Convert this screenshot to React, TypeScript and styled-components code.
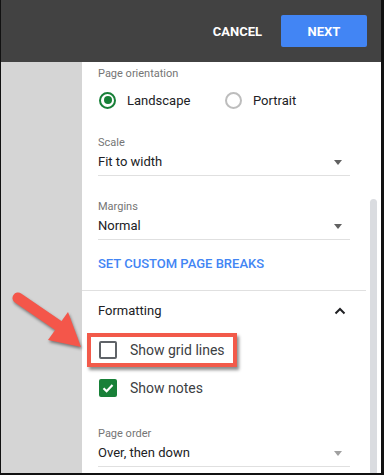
import styled, { createGlobalStyle } from "styled-components";

const GlobalStyle = createGlobalStyle`
  html, body {
    margin: 0;
    padding: 0;
    background: #000;
  }
  * {
    box-sizing: border-box;
  }
`;

const Frame = styled.div`
  position: relative;
  width: 384px;
  height: 475px;
  display: flex;
  flex-direction: column;
  background: #111;
  border-left: 1px solid #111;
  border-right: 3px solid #111;
  border-bottom: 2px solid #111;
  font-family: Roboto, "Liberation Sans", sans-serif;
  overflow: hidden;
`;

const Header = styled.header`
  height: 62px;
  flex: none;
  background: #424242;
  display: flex;
  align-items: center;
  justify-content: flex-end;
  gap: 19px;
  padding-right: 14px;
`;

const TextButton = styled.button`
  background: none;
  border: none;
  padding: 0;
  color: #fff;
  font: 700 13px Roboto, "Liberation Sans", sans-serif;
`;

const PrimaryButton = styled.button`
  width: 86px;
  height: 32px;
  border: none;
  border-radius: 2px;
  background: #4285f4;
  color: #fff;
  font: 700 13px Roboto, "Liberation Sans", sans-serif;
`;

const Body = styled.div`
  flex: 1;
  display: flex;
  min-height: 0;
`;

const Side = styled.div`
  width: 81px;
  background: #d5d5d5;
`;

const Panel = styled.div`
  position: relative;
  flex: 1;
  background: #fff;
  overflow: hidden;
`;

const Content = styled.div`
  width: 252px;
  margin-left: 16px;
`;

const Label = styled.div<{ $top?: number }>`
  margin-top: ${(p) => p.$top ?? 0}px;
  font-size: 11px;
  line-height: 16px;
  color: #757575;
`;

const RadioRow = styled.div`
  margin-top: 2px;
  height: 32px;
  display: flex;
  align-items: center;
`;

const RadioOption = styled.label<{ $width?: number }>`
  display: flex;
  align-items: center;
  gap: 11px;
  width: ${(p) => (p.$width ? `${p.$width}px` : "auto")};
  padding-left: 1px;
  font-size: 13px;
  color: #202124;
`;

const RadioCircle = styled.span<{ $on?: boolean }>`
  width: 17px;
  height: 17px;
  border-radius: 50%;
  border: 2px solid ${(p) => (p.$on ? "#188038" : "#bdbdbd")};
  display: flex;
  align-items: center;
  justify-content: center;
  &::after {
    content: "";
    width: 8px;
    height: 8px;
    border-radius: 50%;
    background: ${(p) => (p.$on ? "#188038" : "transparent")};
  }
`;

const Field = styled.div<{ $top: number }>`
  margin-top: ${(p) => p.$top}px;
`;

const Select = styled.div`
  margin-top: 1px;
  display: flex;
  align-items: center;
  justify-content: space-between;
  padding: 0 8px 3px 0;
  border-bottom: 1px solid #e0e0e0;
  font-size: 13px;
  line-height: 20px;
  color: #202124;
`;

const Caret = styled.span<{ $muted?: boolean }>`
  width: 0;
  height: 0;
  border-left: 4.5px solid transparent;
  border-right: 4.5px solid transparent;
  border-top: 5px solid ${(p) => (p.$muted ? "#a0a0a0" : "#616161")};
`;

const LinkButton = styled.div`
  margin-top: 16px;
  padding-bottom: 18px;
  font-size: 13px;
  font-weight: 500;
  line-height: 16px;
  color: #4285f4;
`;

const Separator = styled.div`
  height: 1px;
  margin-right: 15px;
  background: #e0e0e0;
`;

const SectionHead = styled.div`
  margin-top: 10px;
  display: flex;
  align-items: center;
  justify-content: space-between;
  padding-right: 4px;
  font-size: 13px;
  line-height: 20px;
  color: #202124;
`;

const CheckRow = styled.div<{ $first?: boolean }>`
  position: relative;
  margin-top: ${(p) => (p.$first ? 10 : 0)}px;
  height: 38px;
  display: flex;
  align-items: center;
  gap: 13px;
  padding-left: 1px;
  font-size: 14px;
  color: #3c4043;
`;

const Box = styled.span<{ $checked?: boolean }>`
  width: 18px;
  height: 18px;
  border-radius: 2px;
  border: ${(p) => (p.$checked ? "none" : "2px solid #5f6368")};
  background: ${(p) => (p.$checked ? "#188038" : "#fff")};
  display: flex;
  align-items: center;
  justify-content: center;
`;

const Highlight = styled.span`
  position: absolute;
  left: -11px;
  top: 2px;
  width: 150px;
  height: 34px;
  border: 4px solid #f25a4a;
  box-shadow: 2px 3px 3px rgba(0, 0, 0, 0.45);
  pointer-events: none;
`;

const ScrollThumb = styled.div`
  position: absolute;
  right: 4px;
  top: 137px;
  bottom: 0;
  width: 7px;
  border-radius: 4px 4px 0 0;
  background: #dadce0;
`;

const Pointer = styled.svg`
  position: absolute;
  left: 0;
  top: 280px;
  filter: drop-shadow(1px 2px 1.5px rgba(0, 0, 0, 0.45));
`;

const App = () => {
  return (
    <Frame>
      <GlobalStyle />
      <Header>
        <TextButton>CANCEL</TextButton>
        <PrimaryButton>NEXT</PrimaryButton>
      </Header>
      <Body>
        <Side />
        <Panel>
          <Content>
            <Label $top={4}>Page orientation</Label>
            <RadioRow>
              <RadioOption $width={126}>
                <RadioCircle $on />
                Landscape
              </RadioOption>
              <RadioOption>
                <RadioCircle />
                Portrait
              </RadioOption>
            </RadioRow>
            <Field $top={19}>
              <Label>Scale</Label>
              <Select>
                Fit to width
                <Caret />
              </Select>
            </Field>
            <Field $top={23}>
              <Label>Margins</Label>
              <Select>
                Normal
                <Caret />
              </Select>
            </Field>
            <LinkButton>SET CUSTOM PAGE BREAKS</LinkButton>
          </Content>
          <Separator />
          <Content>
            <SectionHead>
              Formatting
              <svg width="12" height="8" viewBox="0 0 12 8">
                <path d="M1.5 6.5 L6 2 L10.5 6.5" fill="none" stroke="#202124" strokeWidth="2" />
              </svg>
            </SectionHead>
            <CheckRow $first>
              <Box />
              Show grid lines
              <Highlight />
            </CheckRow>
            <CheckRow>
              <Box $checked>
                <svg width="14" height="14" viewBox="0 0 14 14">
                  <path d="M2.5 7.2 L5.6 10.2 L11.5 4" fill="none" stroke="#fff" strokeWidth="2.2" />
                </svg>
              </Box>
              Show notes
            </CheckRow>
            <Field $top={19}>
              <Label>Page order</Label>
              <Select>
                Over, then down
                <Caret $muted />
              </Select>
            </Field>
          </Content>
          <ScrollThumb />
        </Panel>
      </Body>
      <Pointer width="100" height="80" viewBox="0 0 100 80">
        <line x1="17" y1="18" x2="58" y2="46" stroke="#f4564a" strokeWidth="11" strokeLinecap="round" />
        <polygon points="67,32 47,60 80,67" fill="#f4564a" />
      </Pointer>
    </Frame>
  );
};

export default App;
